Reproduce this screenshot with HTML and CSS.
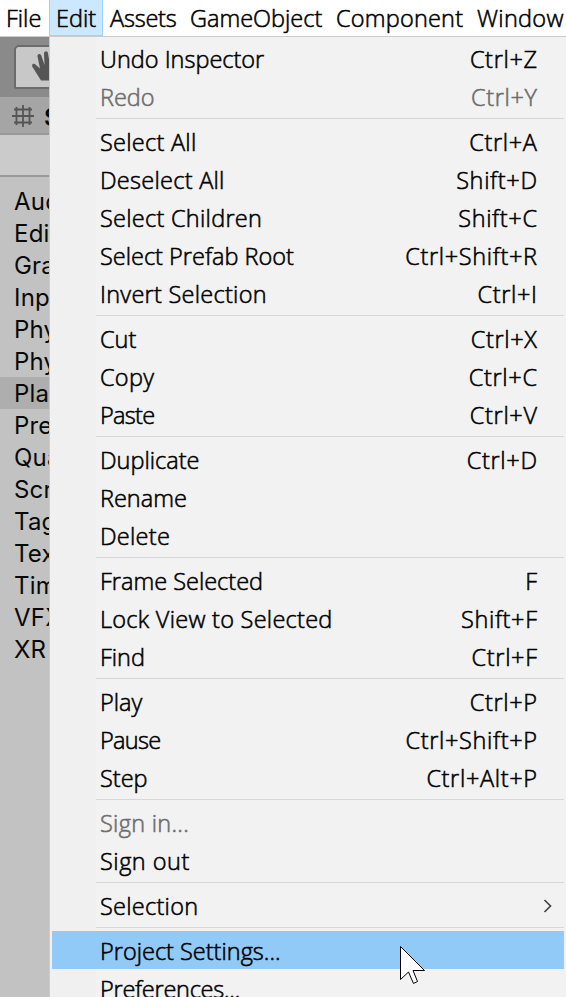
FILE: index.html
```html
<!DOCTYPE html>
<html lang="en">
<head>
<meta charset="utf-8">
<title>Project Settings</title>
<link rel="stylesheet" href="styles.css">
</head>
<body>
<nav class="menubar">
  <span class="tab file">File</span><span class="tab edit">Edit</span><span class="tab assets">Assets</span><span class="tab object">GameObject</span><span class="tab component">Component</span><span class="tab window">Window</span>
</nav>
<div class="workspace">
  <aside class="editor">
    <div class="toolbar"><div class="tool">
      <svg width="36" height="40" viewBox="0 0 36 40"><path d="M25 33.500 16.500 20C15 17 18 15.500 20 18L24 21.500 21.500 9.500C21 6.500 24.500 6 25.300 8.500L28.500 18 28 6.500C28 3.500 32 3.500 32 6.500L34 18V33.500Z" fill="#555"/></svg>
    </div></div>
    <div class="panel-tab">
      <svg width="22" height="22" viewBox="0 0 22 22"><path d="M4.500 2V20M11 0V22M17.500 2V20M2 4.500H20M0 11H22M2 17.500H20" fill="none" stroke="#555" stroke-width="1.800"/></svg>
      <b>Settings</b>
    </div>
    <div class="search"></div>
    <ul class="categories">
      <li>Audio</li><li>Editor</li><li>Graphics</li><li>Input Manager</li><li>Physics</li><li>Physics 2D</li><li class="active">Player</li><li>Preset Manager</li><li>Quality</li><li>Script Execution Order</li><li>Tags and Layers</li><li>TextMesh Pro</li><li>Time</li><li>VFX</li><li>XR</li>
    </ul>
  </aside>
  <main class="menu">
    <div class="item"><span>Undo Inspector</span><kbd>Ctrl+Z</kbd></div>
    <div class="item disabled"><span>Redo</span><kbd>Ctrl+Y</kbd></div>
    <hr>
    <div class="item loose"><span>Select All</span><kbd>Ctrl+A</kbd></div>
    <div class="item loose"><span>Deselect All</span><kbd>Shift+D</kbd></div>
    <div class="item loose"><span>Select Children</span><kbd>Shift+C</kbd></div>
    <div class="item"><span>Select Prefab Root</span><kbd>Ctrl+Shift+R</kbd></div>
    <div class="item loose"><span>Invert Selection</span><kbd>Ctrl+I</kbd></div>
    <hr>
    <div class="item"><span>Cut</span><kbd>Ctrl+X</kbd></div>
    <div class="item loose"><span>Copy</span><kbd>Ctrl+C</kbd></div>
    <div class="item tight"><span>Paste</span><kbd>Ctrl+V</kbd></div>
    <hr>
    <div class="item"><span>Duplicate</span><kbd>Ctrl+D</kbd></div>
    <div class="item"><span>Rename</span></div>
    <div class="item loose"><span>Delete</span></div>
    <hr>
    <div class="item"><span>Frame Selected</span><kbd>F</kbd></div>
    <div class="item loose"><span>Lock View to Selected</span><kbd>Shift+F</kbd></div>
    <div class="item"><span>Find</span><kbd>Ctrl+F</kbd></div>
    <hr>
    <div class="item"><span>Play</span><kbd>Ctrl+P</kbd></div>
    <div class="item tight"><span>Pause</span><kbd>Ctrl+Shift+P</kbd></div>
    <div class="item"><span>Step</span><kbd>Ctrl+Alt+P</kbd></div>
    <hr>
    <div class="item disabled loose"><span>Sign in...</span></div>
    <div class="item airy"><span>Sign out</span></div>
    <hr>
    <div class="item sub loose"><span>Selection</span><svg width="10" height="14" viewBox="0 0 10 14"><path d="M1.500 1 7.500 7 1.500 13" fill="none" stroke="#444" stroke-width="1.700"/></svg></div>
    <hr>
    <div class="item hover"><span>Project Settings...</span></div>
    <div class="item snug"><span>Preferences...</span></div>
  </main>
</div>
<svg class="cursor" width="28" height="40" viewBox="0 0 28 40"><path d="M.5.5V33.500L8.500 26 13.500 37.500 17.500 35.500 13 24.500H24.500Z" fill="#fff" stroke="#000"/></svg>
</body>
</html>
```
FILE: styles.css
```css
* { box-sizing: border-box; }
body {
  margin: 0;
  width: 566px;
  height: 997px;
  overflow: hidden;
  background: #f1f1f1;
  color: #000;
  font: 300 23.5px/38px "Open Sans", sans-serif;
  -webkit-text-stroke: .55px currentColor;
}
.menubar {
  display: flex;
  height: 37px;
  background: #fff;
  border-bottom: 1px solid #ccc;
  white-space: nowrap;
  line-height: 36px;
}
.tab { flex: none; padding-left: 7px; }
.file { width: 49px; padding-left: 6px; }
.edit { width: 54px; height: 36px; background: #cce8ff; border: 1px solid #99d1ff; border-top: 0; padding-left: 6px; }
.assets { width: 80px; letter-spacing: -.2px; }
.object { width: 146px; }
.component { width: 141px; letter-spacing: .2px; }
.window { width: 96px; letter-spacing: .3px; }
.workspace { display: flex; height: 960px; }
.editor {
  width: 49px;
  flex: none;
  overflow: hidden;
  background: #c2c2c2;
  font-family: Inter, sans-serif;
  font-size: 24px;
  font-weight: 400;
  color: #090909;
  -webkit-text-stroke: 0;
}
.toolbar { height: 60px; padding: 8px 0 0 14px; background: #8a8a8a; }
.tool { width: 60px; height: 44px; border: 2px solid #6b6b6b; border-radius: 5px 0 0 2px; background: #c8c8c8; }
.tool svg { display: block; }
.panel-tab { display: flex; align-items: center; height: 38px; padding: 2px 0 0 12px; gap: 10px; background: #a5a5a5; border-bottom: 2px solid #999; }
.panel-tab svg { flex: none; }
.panel-tab b { padding-top: 3px; font-weight: 600; }
.search { height: 42px; background: #cbcbcb; border-bottom: 2px solid #999; }
.categories { margin: 0; padding: 8px 0 0; list-style: none; }
.categories li { height: 32px; padding-left: 14px; line-height: 34px; white-space: nowrap; letter-spacing: .2px; }
.active { background: #aeaeae; }
.menu { width: 517px; flex: none; padding: 2px 2px 0; border-left: 1px solid #ccc; background: linear-gradient(90deg, #f0f0f0 46px, #f2f2f2 46px); }
.item { display: flex; justify-content: space-between; height: 38px; padding: 1px 27px 0 48px; white-space: nowrap; }
.item kbd { font: inherit; letter-spacing: .65px; margin-right: -.65px; }
.loose span { letter-spacing: .27px; }
.airy span { letter-spacing: .5px; }
.tight span { letter-spacing: -.7px; }
.snug span { letter-spacing: -.25px; }
.disabled { color: #6d6d6d; }
.hover { background: #91c9f7; }
.sub { align-items: center; padding-right: 11px; }
hr { height: 7px; margin: 0 0 0 44px; border: 0; background: linear-gradient(#d7d7d7, #d7d7d7) 0 3px / 100% 1px no-repeat; }
.cursor { position: absolute; left: 400px; top: 946px; }
```
